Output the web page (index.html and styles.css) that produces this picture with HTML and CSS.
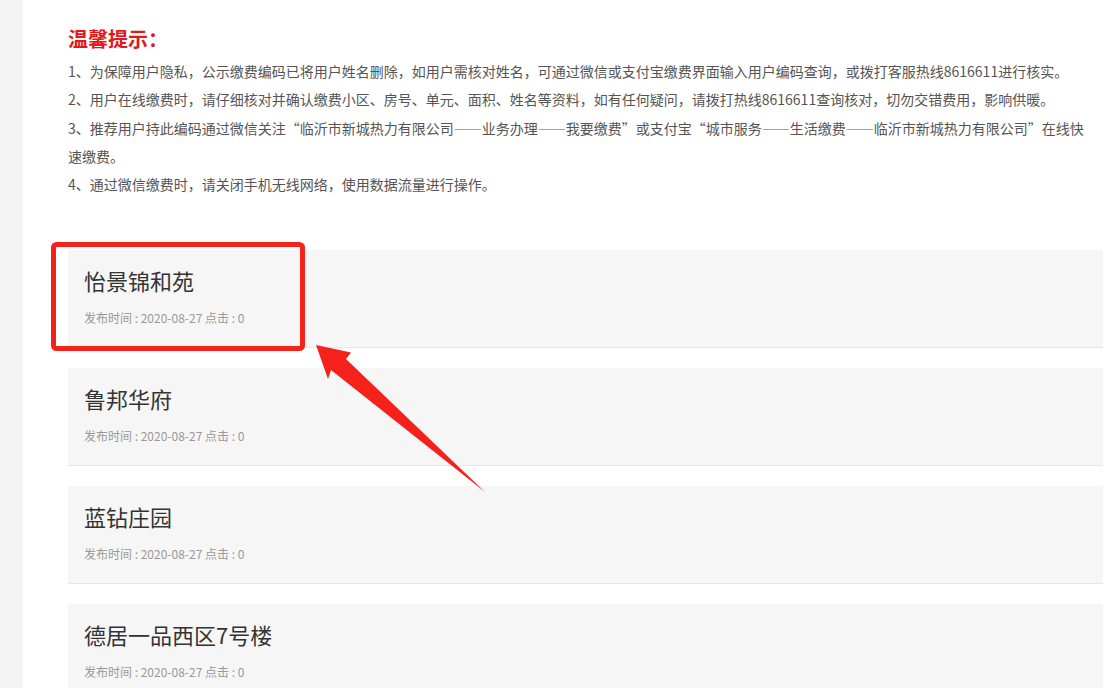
FILE: index.html
```html
<!DOCTYPE html>
<html lang="zh-CN">
<head>
<meta charset="utf-8">
<title>温馨提示</title>
<link rel="stylesheet" href="styles.css">
</head>
<body>
<div class="page">
  <aside class="side"></aside>
  <main class="main">
    <section class="notice">
      <h2 class="notice-title">温馨提示：</h2>
      <p class="notice-line">1、为保障用户隐私，公示缴费编码已将用户姓名删除，如用户需核对姓名，可通过微信或支付宝缴费界面输入用户编码查询，或拨打客服热线8616611进行核实。</p>
      <p class="notice-line">2、用户在线缴费时，请仔细核对并确认缴费小区、房号、单元、面积、姓名等资料，如有任何疑问，请拨打热线8616611查询核对，切勿交错费用，影响供暖。</p>
      <p class="notice-line">3、推荐用户持此编码通过微信关注“临沂市新城热力有限公司——业务办理——我要缴费”或支付宝“城市服务——生活缴费——临沂市新城热力有限公司”在线快速缴费。</p>
      <p class="notice-line">4、通过微信缴费时，请关闭手机无线网络，使用数据流量进行操作。</p>
    </section>
    <ul class="list">
      <li class="card">
        <h3 class="card-title">怡景锦和苑</h3>
        <p class="card-meta">发布时间 : 2020-08-27 点击 : 0</p>
      </li>
      <li class="card">
        <h3 class="card-title">鲁邦华府</h3>
        <p class="card-meta">发布时间 : 2020-08-27 点击 : 0</p>
      </li>
      <li class="card">
        <h3 class="card-title">蓝钻庄园</h3>
        <p class="card-meta">发布时间 : 2020-08-27 点击 : 0</p>
      </li>
      <li class="card">
        <h3 class="card-title">德居一品西区7号楼</h3>
        <p class="card-meta">发布时间 : 2020-08-27 点击 : 0</p>
      </li>
    </ul>
  </main>
</div>
<svg class="annot" width="1109" height="688" viewBox="0 0 1109 688" xmlns="http://www.w3.org/2000/svg">
  <rect x="53.5" y="244.5" width="249" height="104" rx="3" ry="3" fill="none" stroke="#f5211b" stroke-width="5"/>
  <polygon points="316,345 351,352.5 346,359 485,492 331,370 328,379" fill="#f5211b"/>
</svg>
</body>
</html>
```
FILE: styles.css
```css
html, body {
  margin: 0;
  padding: 0;
  background: #ffffff;
}
body {
  font-family: "Microsoft YaHei", "Noto Sans CJK SC", "Noto Sans", sans-serif;
  position: relative;
  overflow: hidden;
  height: 688px;
}
.page {
  display: flex;
  min-height: 688px;
}
.side {
  width: 23px;
  flex: none;
  background: #f4f4f4;
}
.main {
  flex: 1;
  padding: 24px 6px 0 45px;
}
.notice {
  padding-right: 9px;
}
.notice-title {
  margin: 0 0 3px;
  font-size: 20px;
  line-height: 30px;
  font-weight: bold;
  color: #e6161a;
}
.notice-line {
  margin: 0;
  font-size: 14px;
  line-height: 28.3px;
  color: #555555;
}
.list {
  list-style: none;
  margin: 52px 0 0;
  padding: 0;
  display: flex;
  flex-direction: column;
  gap: 20px;
}
.card {
  background: #f6f6f6;
  border-bottom: 1px solid #e6e6e6;
  padding: 15px 16px 19px;
}
.card-title {
  margin: 0;
  font-size: 22px;
  line-height: 30px;
  font-weight: normal;
  color: #333333;
}
.card-meta {
  margin: 13px 0 0;
  font-size: 12px;
  line-height: 20px;
  color: #999999;
}
.annot {
  position: absolute;
  left: 0;
  top: 0;
  pointer-events: none;
}
```
